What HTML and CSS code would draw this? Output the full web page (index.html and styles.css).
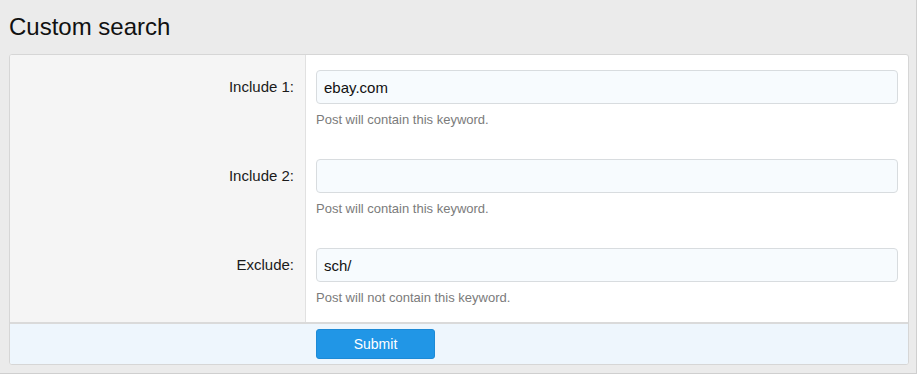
FILE: index.html
```html
<!DOCTYPE html>
<html lang="en">
<head>
    <meta charset="UTF-8">
    <title>Custom search</title>
    <link rel="stylesheet" href="styles.css">
</head>
<body>
<div class="frame">
    <h1 class="title">Custom search</h1>
    <form class="search-form" onsubmit="return false">
        <div class="form-row">
            <label class="form-label" for="include1">Include 1:</label>
            <div class="form-field">
                <input id="include1" type="text" value="ebay.com">
                <p class="hint">Post will contain this keyword.</p>
            </div>
        </div>
        <div class="form-row">
            <label class="form-label" for="include2">Include 2:</label>
            <div class="form-field">
                <input id="include2" type="text" value="">
                <p class="hint">Post will contain this keyword.</p>
            </div>
        </div>
        <div class="form-row">
            <label class="form-label" for="exclude">Exclude:</label>
            <div class="form-field">
                <input id="exclude" type="text" value="sch/">
                <p class="hint">Post will not contain this keyword.</p>
            </div>
        </div>
        <div class="form-footer">
            <input type="submit" value="Submit" class="submit">
        </div>
    </form>
</div>
</body>
</html>
```

FILE: styles.css
```css
body{
    margin: 0;
    font-family: "Liberation Sans", Arial, sans-serif;
    color: #1a1a1a;
}
.frame{
    width: 917px;
    height: 374px;
    background: #ebebeb;
    border-right: 1px solid #cfcfcf;
    border-bottom: 1px solid #cfcfcf;
    padding: 0 9px;
    box-sizing: border-box;
}
.title{
    margin: 0;
    padding-top: 14px;
    height: 54px;
    box-sizing: border-box;
    font-size: 24px;
    line-height: 26px;
    font-weight: normal;
    color: #111;
}
.search-form{
    width: 898px;
    background: #fff;
    border: 1px solid #d6d6d6;
    border-radius: 3px;
    overflow: hidden;
}
.form-row{
    display: grid;
    grid-template-columns: 296px 1fr;
}
.form-label{
    background: #f5f5f5;
    border-right: 1px solid #e1e1e1;
    text-align: right;
    padding: 15px 11px 0 0;
    line-height: 34px;
    font-size: 15px;
    color: #1a1a1a;
}
.form-field{
    padding: 15px 10px 16px 10px;
}
.form-field input{
    display: block;
    width: 100%;
    height: 34px;
    box-sizing: border-box;
    margin: 0;
    padding: 0 7px;
    background: #f7fbfe;
    border: 1px solid #d8dcdf;
    border-radius: 4px;
    font-family: "Liberation Sans", Arial, sans-serif;
    font-size: 15px;
    color: #111;
    outline: none;
}
.hint{
    margin: 8px 0 0;
    font-size: 13px;
    line-height: 16px;
    color: #7b7b7b;
}
.form-footer{
    background: #eef6fd;
    border-top: 2px solid #dadada;
    padding: 5px 0 5px 306px;
}
.submit{
    display: block;
    width: 119px;
    height: 30px;
    background: #2196e6;
    border: 1px solid #1d8ad6;
    border-radius: 3px;
    color: #fff;
    font-family: "Liberation Sans", Arial, sans-serif;
    font-size: 14px;
    cursor: pointer;
}
```
